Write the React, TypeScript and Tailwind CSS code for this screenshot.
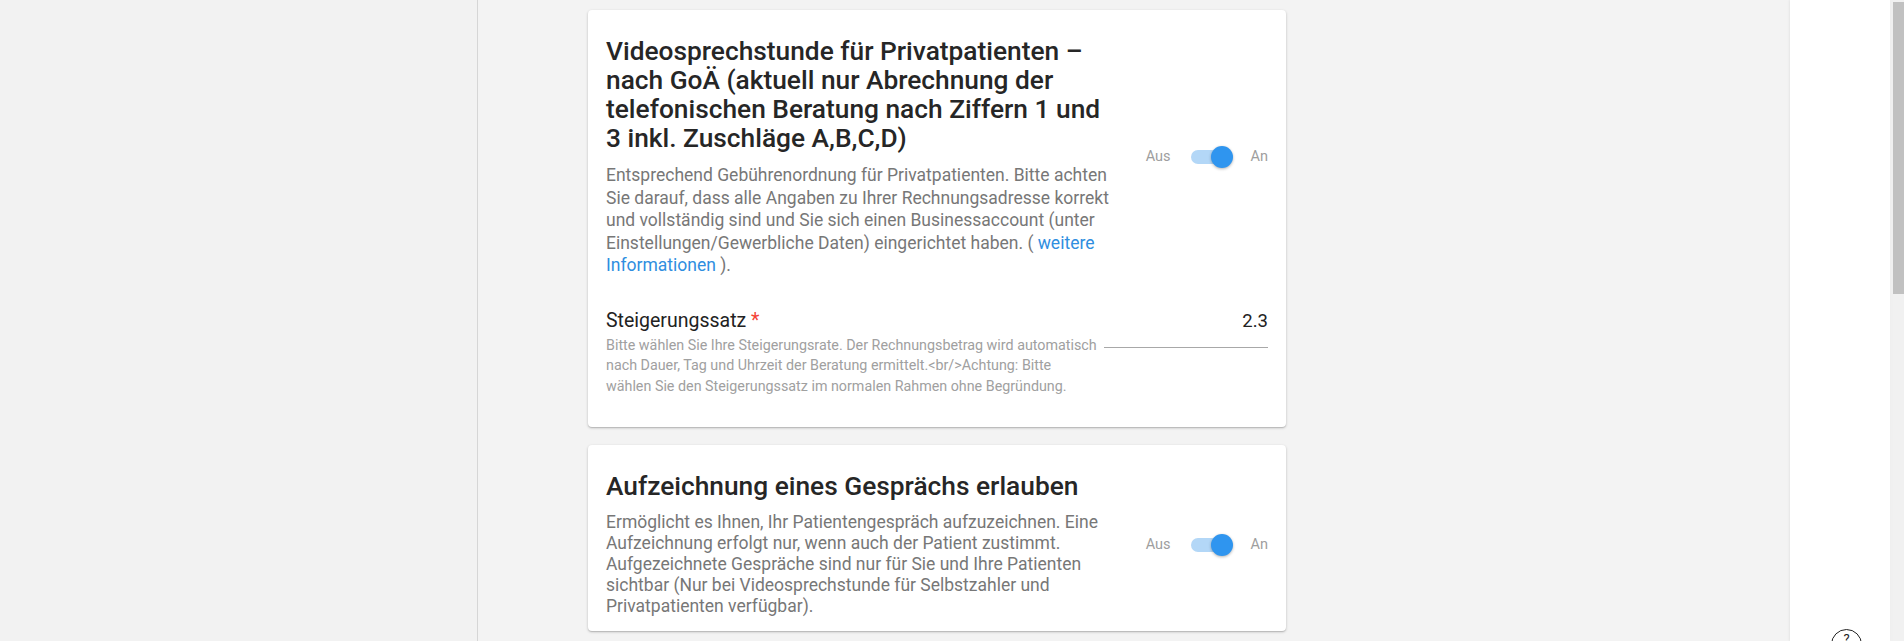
import React from 'react'

type SwitchProps = { checked: boolean }

function LabeledSwitch({ checked }: SwitchProps) {
  return (
    <div className="flex shrink-0 items-center text-[14.5px] text-[#9e9e9e]">
      <span className="mr-[20px]">Aus</span>
      <span className="relative inline-flex h-[14px] w-[36px] items-center rounded-full bg-[#b3d7f7]">
        <span
          className={`absolute top-1/2 h-[22px] w-[22px] -translate-y-1/2 rounded-full bg-[#2f95ef] shadow-[0_1px_3px_rgba(0,0,0,0.3)] ${
            checked ? 'left-[20px]' : 'left-[-4px]'
          }`}
        />
      </span>
      <span className="ml-[24px]">An</span>
    </div>
  )
}

function SettingCard({
  title,
  children,
  footer,
  compact,
}: {
  title: string
  children: React.ReactNode
  footer?: React.ReactNode
  compact?: boolean
}) {
  return (
    <div
      className={`w-[698px] rounded-[4px] bg-white px-[18px] pt-[27px] shadow-[0_1px_3px_rgba(0,0,0,0.2),0_1px_1px_rgba(0,0,0,0.12)] ${
        compact ? 'pb-[14px]' : 'pb-[17px]'
      }`}
    >
      <div className="flex items-center">
        <div className="mr-[26px] flex-1">
          <h2 className="w-[502px] text-[26.3px] leading-[29px] font-medium text-[#262626]">{title}</h2>
          <p className={`mt-[11px] text-[17.5px] text-[#777] ${compact ? 'leading-[21px]' : 'leading-[22.5px]'}`}>
            {children}
          </p>
        </div>
        <LabeledSwitch checked />
      </div>
      {footer}
    </div>
  )
}

export default function App() {
  return (
    <div className="flex h-[641px] w-full overflow-hidden bg-[#f3f3f3] font-['Roboto',sans-serif]">
      <aside className="w-[478px] shrink-0 border-r border-[#d6d6d6] bg-[#f2f2f2]" />

      <main className="flex flex-1 flex-col gap-[18px] pt-[10px] pl-[110px]">
        <SettingCard
          title="Videosprechstunde für Privatpatienten – nach GoÄ (aktuell nur Abrechnung der telefonischen Beratung nach Ziffern 1 und 3 inkl. Zuschläge A,B,C,D)"
          footer={
            <div className="mt-[32px] mb-[14px] flex items-start justify-between">
              <div>
                <div className="text-[19.5px] leading-[24px] text-[#222]">
                  Steigerungssatz <span className="text-[#f44336]">*</span>
                </div>
                <p className="mt-[2px] w-[492px] text-[14.3px] leading-[20.5px] text-[#a0a0a0]">
                  Bitte wählen Sie Ihre Steigerungsrate. Der Rechnungsbetrag wird automatisch nach Dauer, Tag und
                  Uhrzeit der Beratung ermittelt.&lt;br/&gt;Achtung: Bitte wählen Sie den Steigerungssatz im normalen
                  Rahmen ohne Begründung.
                </p>
              </div>
              <div className="w-[164px] border-b border-[#a8a8a8] pb-[14px] text-right text-[18.5px] leading-[24px] text-[#222]">
                2.3
              </div>
            </div>
          }
        >
          Entsprechend Gebührenordnung für Privatpatienten. Bitte achten Sie darauf, dass alle Angaben zu Ihrer
          Rechnungsadresse korrekt und vollständig sind und Sie sich einen Businessaccount (unter
          Einstellungen/Gewerbliche Daten) eingerichtet haben. ({' '}
          <a className="text-[#2f8ee0]" href="#">
            weitere Informationen
          </a>{' '}
          ).
        </SettingCard>

        <SettingCard title="Aufzeichnung eines Gesprächs erlauben" compact>
          Ermöglicht es Ihnen, Ihr Patientengespräch aufzuzeichnen. Eine Aufzeichnung erfolgt nur, wenn auch der
          Patient zustimmt. Aufgezeichnete Gespräche sind nur für Sie und Ihre Patienten sichtbar (Nur bei
          Videosprechstunde für Selbstzahler und Privatpatienten verfügbar).
        </SettingCard>
      </main>

      {/* right help rail */}
      <div className="relative w-[100px] shrink-0 bg-white shadow-[-1px_0_2px_rgba(0,0,0,0.06)]">
        <div className="absolute top-[629px] left-[41px] flex h-[31px] w-[31px] items-start justify-center rounded-full border border-[#222] text-[13px] leading-[18px] text-[#222]">
          ?
        </div>
      </div>
      <div className="w-[3px] shrink-0 bg-[#f0f0f0]" />

      {/* scrollbar */}
      <div className="w-[11px] shrink-0 bg-[#f1f1f1] pt-[2px]">
        <div className="h-[292px] w-full bg-[#c1c1c1]" />
      </div>
    </div>
  )
}
